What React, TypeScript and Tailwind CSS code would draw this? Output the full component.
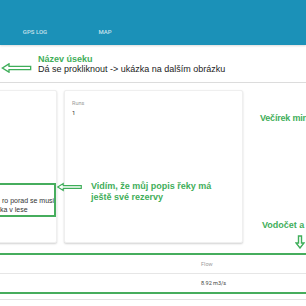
import React from "react";

const G = "#3fae5a";

function LeftArrow({ className }: { className?: string }) {
  return (
    <svg className={className} viewBox="0 0 36 12" fill="white" stroke={G} strokeWidth="1.6">
      <path d="M1 6 L9 1 L9 4 L35 4 L35 8 L9 8 L9 11 Z" strokeLinejoin="miter" />
    </svg>
  );
}

function DownArrow({ className }: { className?: string }) {
  return (
    <svg className={className} viewBox="0 0 10 14" fill="white" stroke={G} strokeWidth="1.4">
      <path d="M3.5 1 L6.5 1 L6.5 8 L9 8 L5 13 L1 8 L3.5 8 Z" />
    </svg>
  );
}

export default function App() {
  return (
    <div className="relative w-[306px] h-[306px] overflow-hidden bg-white font-['Roboto',sans-serif]">
      {/* header */}
      <div className="h-[45px] bg-[#1b91b8] shadow-[0_1px_2px_rgba(0,0,0,0.15)] flex items-end pb-[9px]">
        <div className="flex text-[6px] font-medium text-white/75">
          <div className="w-[70px] flex justify-center">GPS LOG</div>
          <div className="w-[70px] flex justify-center">MAP</div>
        </div>
      </div>

      {/* section title */}
      <div className="h-[38px] border-b border-[#dcdcdc] flex items-center font-['Liberation_Sans',sans-serif]">
        <LeftArrow className="w-[35px] h-[10px] -ml-[1px] mt-[9px]" />
        <div className="ml-[4px] leading-[10px]">
          <div className="text-[9px] font-bold text-[#3fae5a]">Název úseku</div>
          <div className="text-[9px] text-[#222]">Dá se prokliknout -&gt; ukázka na dalším obrázku</div>
        </div>
      </div>

      {/* cards */}
      <div className="flex gap-[7px] mt-[7px] h-[153px]">
        <div className="-ml-[10px] w-[67px] bg-white rounded-[2px] shadow-[0_1px_2px_rgba(0,0,0,0.18)] border border-[#efefef] flex flex-col justify-end pb-[28px] overflow-hidden">
          <div className="text-[7px] leading-[9px] text-[#333] font-['Liberation_Sans',sans-serif] whitespace-nowrap pl-[10px]">
            <div className="ml-[1px]">ro porad se musi</div>
            <div className="-ml-[1px]">ka v lese</div>
          </div>
        </div>
        <div className="w-[179px] bg-white rounded-[2px] shadow-[0_1px_2px_rgba(0,0,0,0.18)] border border-[#efefef] px-[7px] pt-[9px]">
          <div className="text-[5.5px] text-[#9a9a9a] leading-[7px]">Runs</div>
          <div className="text-[6px] text-[#333] leading-[9px] mt-[1px]">1</div>
        </div>
        <div className="flex-1" />
      </div>

      {/* table */}
      <div className="mt-[10px] border-y-[2px] border-[#46ad5d] text-[5.5px]">
        <div className="h-[19px] border-b border-[#e6e6e6] flex items-center pl-[201px] text-[#9a9a9a]">Flow</div>
        <div className="h-[18px] flex items-center pl-[201px] text-[#444]">8.92 m3/s</div>
      </div>
      <div className="mt-[5px] border-b border-[#e2e2e2]" />

      {/* annotations */}
      <div className="absolute left-[-4px] top-[183px] w-[60px] h-[34px] border-[2px] border-[#46ad5d]" />
      <LeftArrow className="absolute left-[57px] top-[182px] w-[25px] h-[10px]" />
      <div className="absolute left-[91px] top-[181px] text-[9px] leading-[11px] font-bold text-[#3fae5a] font-['Liberation_Sans',sans-serif] whitespace-nowrap">
        <div>Vidím, že můj popis řeky má</div>
        <div>ještě své rezervy</div>
      </div>
      <div className="absolute left-[260px] top-[112px] text-[9px] font-bold text-[#3fae5a] font-['Liberation_Sans',sans-serif] whitespace-nowrap tracking-[-0.2px]">
        Večírek min
      </div>
      <div className="absolute left-[262px] top-[219px] text-[9px] font-bold text-[#3fae5a] font-['Liberation_Sans',sans-serif] whitespace-nowrap">
        Vodočet a s
      </div>
      <DownArrow className="absolute left-[295px] top-[235px] w-[10px] h-[14px]" />
    </div>
  );
}
